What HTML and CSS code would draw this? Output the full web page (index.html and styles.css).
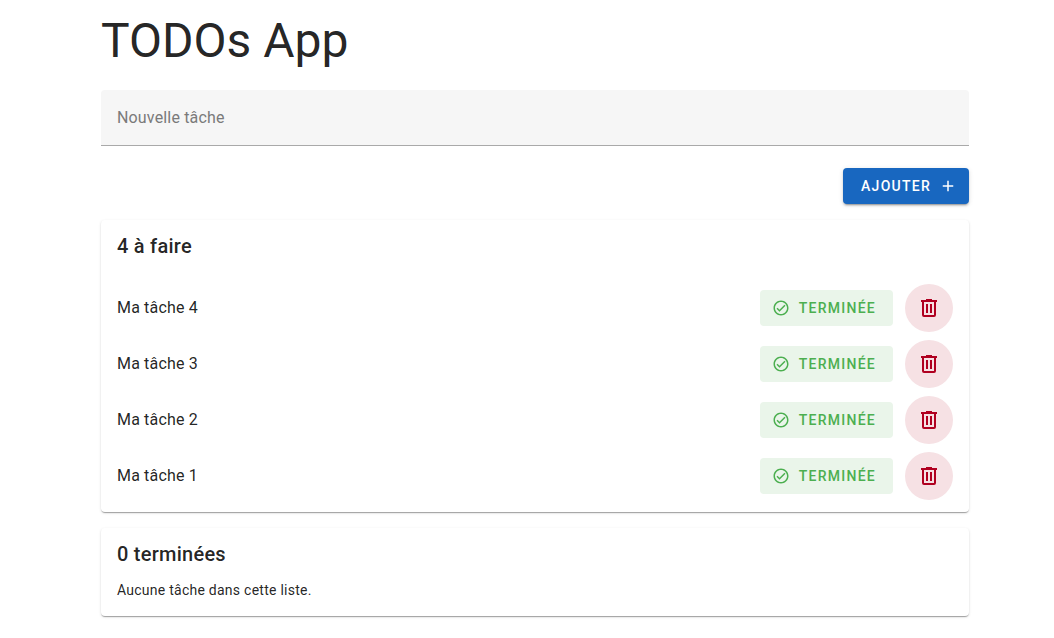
FILE: index.html
```html
<!DOCTYPE html>
<html lang="fr">
<head>
<meta charset="utf-8">
<meta name="viewport" content="width=device-width, initial-scale=1">
<title>TODOs App</title>
<link rel="stylesheet" href="styles.css">
</head>
<body>
<svg class="sprite" aria-hidden="true">
  <symbol id="plus" viewBox="0 0 24 24"><path d="M19,13H13V19H11V13H5V11H11V5H13V11H19V13Z"/></symbol>
  <symbol id="check" viewBox="0 0 24 24"><path d="M12 2C6.5 2 2 6.5 2 12S6.5 22 12 22 22 17.5 22 12 17.5 2 12 2M12 20C7.59 20 4 16.41 4 12S7.59 4 12 4 20 7.59 20 12 16.41 20 12 20M16.59 7.58L10 14.17L7.41 11.59L6 13L10 17L18 9L16.59 7.58Z"/></symbol>
  <symbol id="trash" viewBox="0 0 24 24"><path d="M9,3V4H4V6H5V19A2,2 0 0,0 7,21H17A2,2 0 0,0 19,19V6H20V4H15V3H9M7,6H17V19H7V6M9,8V17H11V8H9M13,8V17H15V8H13Z"/></symbol>
</svg>
<main class="container">
  <h1 class="title">TODOs App</h1>
  <form class="form">
    <input class="field" type="text" placeholder="Nouvelle tâche" aria-label="Nouvelle tâche">
    <button class="btn btn-primary" type="button">Ajouter<svg class="icon"><use href="#plus"/></svg></button>
  </form>
  <section class="card">
    <h2 class="card-title">4 à faire</h2>
    <ul class="list">
      <li class="task"><span class="task-name">Ma tâche 4</span>
        <button class="btn btn-done" type="button"><svg class="icon"><use href="#check"/></svg>Terminée</button>
        <button class="btn-delete" type="button" aria-label="Supprimer Ma tâche 4"><svg class="icon-large"><use href="#trash"/></svg></button></li>
      <li class="task"><span class="task-name">Ma tâche 3</span>
        <button class="btn btn-done" type="button"><svg class="icon"><use href="#check"/></svg>Terminée</button>
        <button class="btn-delete" type="button" aria-label="Supprimer Ma tâche 3"><svg class="icon-large"><use href="#trash"/></svg></button></li>
      <li class="task"><span class="task-name">Ma tâche 2</span>
        <button class="btn btn-done" type="button"><svg class="icon"><use href="#check"/></svg>Terminée</button>
        <button class="btn-delete" type="button" aria-label="Supprimer Ma tâche 2"><svg class="icon-large"><use href="#trash"/></svg></button></li>
      <li class="task"><span class="task-name">Ma tâche 1</span>
        <button class="btn btn-done" type="button"><svg class="icon"><use href="#check"/></svg>Terminée</button>
        <button class="btn-delete" type="button" aria-label="Supprimer Ma tâche 1"><svg class="icon-large"><use href="#trash"/></svg></button></li>
    </ul>
  </section>
  <section class="card">
    <h2 class="card-title">0 terminées</h2>
    <p class="card-text">Aucune tâche dans cette liste.</p>
  </section>
</main>
</body>
</html>
```
FILE: styles.css
```css
* { box-sizing: border-box; margin: 0; }

body {
  padding-left: 16px;
  background: #fff;
  color: rgba(0, 0, 0, 0.87);
  font-family: Roboto, sans-serif;
  font-size: 16px;
  line-height: 24px;
}

button, input { font: inherit; border: 0; }
button { cursor: pointer; }
.sprite { display: none; }

.container {
  display: flex;
  flex-direction: column;
  gap: 16px;
  max-width: 900px;
  margin: 0 auto;
  padding: 16px;
}

.title {
  margin-bottom: 8px;
  font-size: 48px;
  font-weight: 400;
  line-height: 50px;
}

.form {
  display: flex;
  flex-direction: column;
  align-items: flex-end;
  gap: 22px;
}

.field {
  width: 100%;
  height: 56px;
  padding: 0 16px;
  border-bottom: 1px solid #a9a9a9;
  border-radius: 4px 4px 0 0;
  background: #f6f6f6;
  color: inherit;
  letter-spacing: 0.01em;
  outline: none;
}
.field::placeholder { color: #7a7a7a; opacity: 1; }

.btn {
  display: inline-flex;
  align-items: center;
  gap: 8px;
  height: 36px;
  border-radius: 4px;
  font-size: 14px;
  font-weight: 500;
  letter-spacing: 0.09em;
  text-transform: uppercase;
}

.btn-primary {
  padding: 0 12px 0 18px;
  background: #1867c0;
  color: #fff;
  box-shadow: 0 3px 1px -2px rgba(0, 0, 0, 0.2), 0 2px 2px rgba(0, 0, 0, 0.14), 0 1px 5px rgba(0, 0, 0, 0.12);
}

.btn-done {
  gap: 9px;
  padding: 0 17px 0 12px;
  background: #eaf5ea;
  color: #4caf50;
}

.btn-delete {
  display: grid;
  place-items: center;
  width: 48px;
  height: 48px;
  padding: 0;
  border-radius: 50%;
  background: #f6e1e4;
  color: #b00020;
}

.icon { width: 18px; height: 18px; fill: currentColor; }
.icon-large { width: 24px; height: 24px; fill: currentColor; }

.card {
  border-radius: 4px;
  background: #fff;
  box-shadow: 0 2px 1px -1px rgba(0, 0, 0, 0.2), 0 1px 1px rgba(0, 0, 0, 0.14), 0 1px 3px rgba(0, 0, 0, 0.12);
}

.card-title {
  padding: 10px 16px;
  font-size: 20px;
  font-weight: 500;
  line-height: 32px;
  letter-spacing: 0.0125em;
}

.list { padding: 8px 0; list-style: none; }

.task {
  display: flex;
  align-items: center;
  gap: 12px;
  min-height: 56px;
  padding: 4px 16px;
}
.task-name { flex: 1; letter-spacing: 0.01em; }

.card-text {
  padding: 0 16px 16px;
  font-size: 14px;
  line-height: 20px;
  letter-spacing: 0.018em;
}
```
